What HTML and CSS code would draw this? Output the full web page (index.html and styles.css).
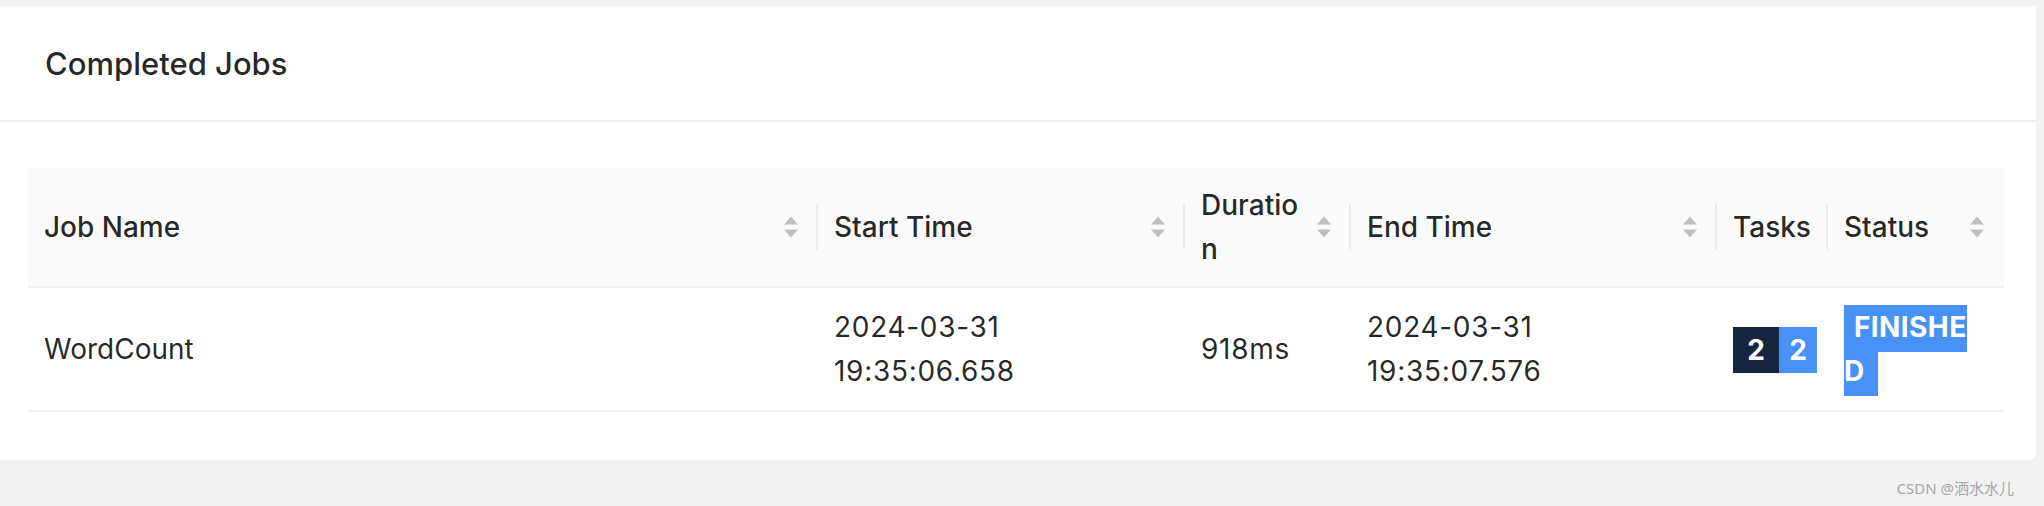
FILE: index.html
```html
<!DOCTYPE html>
<html lang="en">
<head>
<meta charset="utf-8">
<title>Completed Jobs</title>
<link rel="stylesheet" href="styles.css">
</head>
<body>
<div class="page">
  <section class="card">
    <header class="card-head">
      <h2 class="card-title">Completed Jobs</h2>
    </header>
    <div class="card-body">
      <table class="jobs">
        <colgroup>
          <col class="c-name">
          <col class="c-start">
          <col class="c-dur">
          <col class="c-end">
          <col class="c-tasks">
          <col class="c-status">
        </colgroup>
        <thead>
          <tr>
            <th><div class="th-inner"><span class="th-title">Job Name</span><svg class="sorter" viewBox="0 0 16 24" width="16" height="24"><path d="M1 9.5 L8 1.5 L15 9.5 Z"/><path d="M1 14.5 L15 14.5 L8 22.5 Z"/></svg></div></th>
            <th><div class="th-inner"><span class="th-title">Start Time</span><svg class="sorter" viewBox="0 0 16 24" width="16" height="24"><path d="M1 9.5 L8 1.5 L15 9.5 Z"/><path d="M1 14.5 L15 14.5 L8 22.5 Z"/></svg></div></th>
            <th><div class="th-inner"><span class="th-title">Duration</span><svg class="sorter" viewBox="0 0 16 24" width="16" height="24"><path d="M1 9.5 L8 1.5 L15 9.5 Z"/><path d="M1 14.5 L15 14.5 L8 22.5 Z"/></svg></div></th>
            <th><div class="th-inner"><span class="th-title">End Time</span><svg class="sorter" viewBox="0 0 16 24" width="16" height="24"><path d="M1 9.5 L8 1.5 L15 9.5 Z"/><path d="M1 14.5 L15 14.5 L8 22.5 Z"/></svg></div></th>
            <th><div class="th-inner"><span class="th-title">Tasks</span></div></th>
            <th><div class="th-inner"><span class="th-title">Status</span><svg class="sorter" viewBox="0 0 16 24" width="16" height="24"><path d="M1 9.5 L8 1.5 L15 9.5 Z"/><path d="M1 14.5 L15 14.5 L8 22.5 Z"/></svg></div></th>
          </tr>
        </thead>
        <tbody>
          <tr>
            <td>WordCount</td>
            <td class="num">2024-03-31<br>19:35:06.658</td>
            <td class="num">918ms</td>
            <td class="num">2024-03-31<br>19:35:07.576</td>
            <td><span class="badges"><span class="badge badge-total">2</span><span class="badge badge-finished">2</span></span></td>
            <td><span class="tag">FINISHED</span></td>
          </tr>
        </tbody>
      </table>
    </div>
  </section>
  <footer class="watermark">CSDN @洒水水儿</footer>
</div>
</body>
</html>
```

FILE: styles.css
```css
html, body {
  margin: 0;
  padding: 0;
  background: #f2f2f2;
}

body {
  font-family: Inter, "Noto Sans", "Liberation Sans", sans-serif;
  color: rgba(0, 0, 0, 0.85);
}

.page {
  padding: 6px 8px 0 0;
}

.card {
  background: #ffffff;
  border-radius: 0 0 6px 0;
}

.card-head {
  height: 114px;
  padding-left: 45px;
  display: flex;
  align-items: center;
  border-bottom: 2px solid #f0f0f0;
}

.card-title {
  margin: 0;
  font-size: 31px;
  font-weight: 500;
  color: rgba(0, 0, 0, 0.85);
}

.card-body {
  padding: 46px 32px 48px 28px;
}

.jobs {
  width: 100%;
  table-layout: fixed;
  border-collapse: collapse;
  border-spacing: 0;
  font-size: 28px;
  line-height: 44px;
}

.c-name { width: 790px; }
.c-start { width: 367px; }
.c-dur { width: 166px; }
.c-end { width: 366px; }
.c-tasks { width: 111px; }
.c-status { width: 176px; }

.jobs th {
  position: relative;
  background: #fafafa;
  font-weight: 500;
  text-align: left;
  padding: 15px 16px;
  border-bottom: 2px solid #f0f0f0;
  vertical-align: middle;
}

.jobs th:not(:last-child)::after {
  content: "";
  position: absolute;
  right: 0;
  top: 50%;
  width: 2px;
  height: 45px;
  transform: translateY(-50%);
  background: #ebebeb;
}

.th-inner {
  display: flex;
  align-items: center;
  gap: 14px;
}

.th-title {
  flex: 1;
  min-width: 0;
  overflow-wrap: anywhere;
}

.sorter {
  flex: none;
  fill: #bfbfbf;
  margin-right: 3px;
}

.jobs td {
  padding: 17px 16px;
  border-bottom: 2px solid #f0f0f0;
  vertical-align: middle;
  overflow-wrap: anywhere;
}

.jobs td.num {
  letter-spacing: 0.7px;
}

.badges {
  display: inline-flex;
  vertical-align: middle;
}

.badge {
  display: inline-block;
  height: 46px;
  line-height: 46px;
  text-align: center;
  color: #ffffff;
  font-size: 28px;
  font-weight: 700;
}

.badge-total {
  width: 46px;
  background: #172640;
}

.badge-finished {
  width: 38px;
  background: #4891f7;
}

.tag {
  background: #4891f7;
  color: #ffffff;
  font-size: 28px;
  font-weight: 700;
  letter-spacing: 0.4px;
  padding: 5px 13px 8px 10px;
}

.watermark {
  display: flex;
  justify-content: flex-end;
  padding: 19px 22px 0 0;
  font-family: "Noto Sans", "Noto Sans CJK SC", sans-serif;
  font-size: 15px;
  line-height: 18px;
  color: #a6a6a6;
}
```
